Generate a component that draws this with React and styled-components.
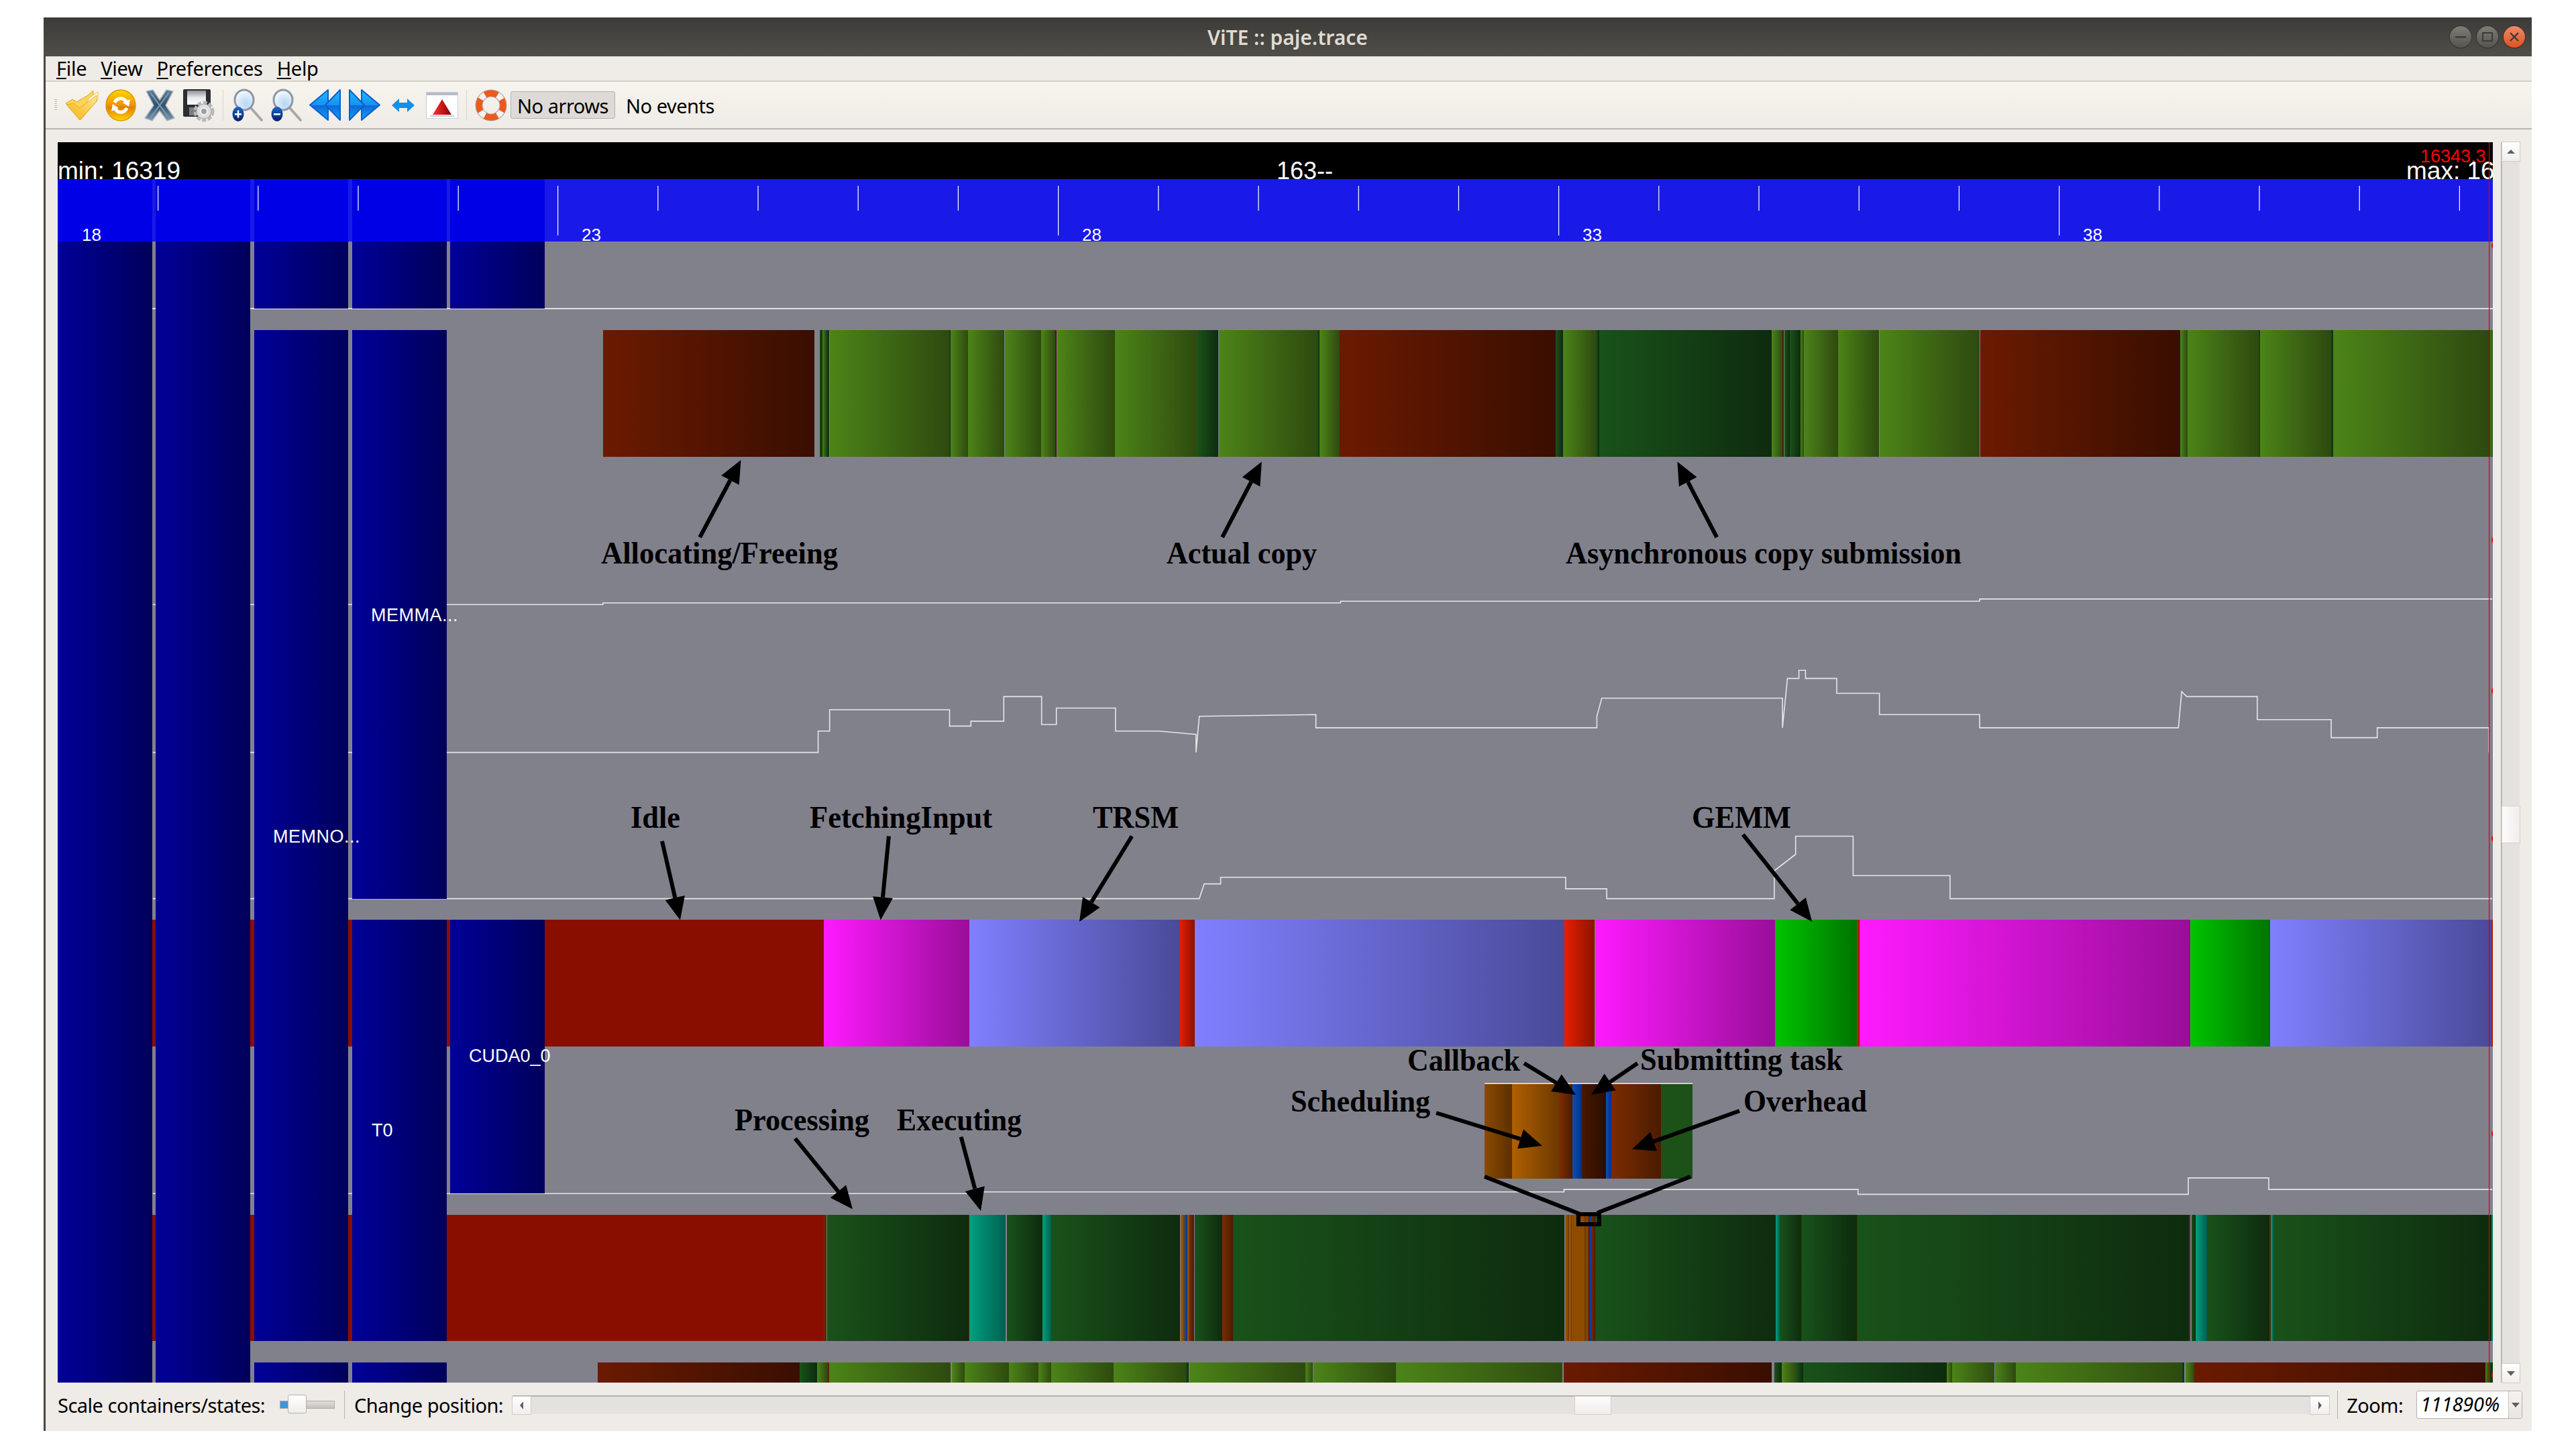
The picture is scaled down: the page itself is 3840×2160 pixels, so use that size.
import React from 'react';
import styled, { createGlobalStyle } from 'styled-components';

const Global = createGlobalStyle`
  html, body { margin: 0; padding: 0; background: #fff; }
  #root { width: 3840px; height: 2160px; }
  * { box-sizing: border-box; }
`;

const Desktop = styled.div`
  width: 3840px;
  height: 2160px;
  padding: 26px 66px 27px 65px;
  background: #fff;
  font-family: "Noto Sans", sans-serif;
  color: #000;
`;
const Win = styled.div`
  height: 2107px;
  display: flex;
  flex-direction: column;
  background: #efebe7;
  border-left: 3px solid #4d4643;
`;
const TitleBar = styled.div`
  flex: 0 0 58px;
  margin-left: -3px;
  display: grid;
  grid-template-columns: 1fr auto 1fr;
  align-items: center;
  background: linear-gradient(#3c3b37, #4f4e49);
`;
const Title = styled.div`
  font-size: 30px;
  font-weight: 600;
  color: #dfdbd2;
`;
const WinButtons = styled.div`
  grid-column: 3;
  justify-self: end;
  display: flex;
  gap: 8px;
  padding-right: 10px;
`;
const WinButton = styled.div`
  width: 32px;
  height: 32px;
  border-radius: 50%;
  display: flex;
  align-items: center;
  justify-content: center;
  box-shadow: 0 0 0 1px #35342f, 0 1px 1px #35342f;
  background: ${p => p.$close ? 'linear-gradient(#f28a68, #e0501e)' : 'linear-gradient(#7d7c77, #55544f)'};
`;
const MenuBar = styled.div`
  flex: 0 0 38px;
  min-height: 0;
  display: flex;
  align-items: center;
  gap: 21px;
  padding-left: 16px;
  border-bottom: 2px solid #d5d1cc;
  font-size: 29px;
  letter-spacing: -0.3px;
  line-height: 34px;
`;
const Mnemonic = styled.span`
  text-decoration: underline;
  text-decoration-thickness: 2px;
  text-underline-offset: 3px;
`;
const ToolBar = styled.div`
  flex: 0 0 71px;
  display: flex;
  align-items: center;
  padding-left: 13px;
  background: linear-gradient(#f7f4ee, #efebe6);
  border-bottom: 2px solid #b9b5b1;
`;
const Grip = styled.div`
  width: 4px;
  height: 18px;
  margin-right: 8px;
  background: repeating-linear-gradient(#bdb9b4 0 1px, transparent 1px 3px);
`;
const ToolButton = styled.div`
  width: 58px;
  height: 50px;
  display: flex;
  align-items: center;
  justify-content: center;
`;
const ToolSep = styled.div`
  width: 15px;
  height: 46px;
  display: flex;
  justify-content: center;
  &::before { content: ""; width: 1px; background: #d8d4cf; }
`;
const ArrowToggle = styled.div`
  flex: 0 0 156px;
  height: 41px;
  display: flex;
  align-items: center;
  justify-content: center;
  padding-top: 2px;
  background: #dedad7;
  border: 1px solid #b5b1ad;
  border-radius: 3px;
  font-size: 29px;
  letter-spacing: -0.5px;
`;
const ToolLabel = styled.div`
  margin-left: 16px;
  padding-top: 2px;
  font-size: 29px;
  letter-spacing: -0.5px;
`;
const Central = styled.div`
  flex: 0 0 1868px;
  display: flex;
  gap: 12px;
  padding: 19px 18px 0;
`;
const Chart = styled.svg`
  display: block;
  flex: 0 0 3630px;
  height: 1849px;
`;
const VScroll = styled.div`
  position: relative;
  flex: 0 0 28px;
  height: 1849px;
  display: flex;
  flex-direction: column;
  justify-content: space-between;
  background: #e4e2df;
  border-left: 2px solid #b9b5b1;
`;
const ScrollCap = styled.div`
  width: ${p => p.$w || '100%'};
  height: ${p => p.$h || '100%'};
  flex: 0 0 auto;
  display: flex;
  align-items: center;
  justify-content: center;
  background: ${p => p.$bg || 'linear-gradient(#fff, #f1efec)'};
  box-shadow: 0 0 0 1px #d0ccc8;
`;
const VThumb = styled.div`
  position: absolute;
  left: 0;
  right: 0;
  top: 990px;
  height: 54px;
  background: linear-gradient(90deg, #fdfcfb, #f0eeeb);
  box-shadow: 0 0 0 1px #d5d1cd;
`;
const Arrow = styled.div`
  width: 0;
  height: 0;
  ${p => p.$dir === 'up' && `border: 6px solid transparent; border-top: 0; border-bottom: 6px solid #5f5f5f;`}
  ${p => p.$dir === 'down' && `border: 6px solid transparent; border-bottom: 0; border-top: 7px solid #5f5f5f;`}
  ${p => p.$dir === 'left' && `border: 6px solid transparent; border-left: 0; border-right: 5px solid #5f5f5f;`}
  ${p => p.$dir === 'right' && `border: 6px solid transparent; border-right: 0; border-left: 5px solid #5f5f5f;`}
`;
const StatusBar = styled.div`
  flex: 1;
  display: flex;
  align-items: center;
  padding: 0 19px 6px 18px;
  font-size: 29px;
  letter-spacing: -0.5px;
  white-space: nowrap;
`;
const StatusText = styled.div`
  flex: 0 0 ${p => p.$w}px;
  margin-right: ${p => p.$mr || 0}px;
`;
const StatusSep = styled.div`
  flex: 0 0 1px;
  height: 42px;
  background: #b9b5b1;
  margin: 0 ${p => p.$r || 14}px 0 ${p => p.$l || 14}px;
`;
const Slider = styled.div`
  position: relative;
  flex: 0 0 82px;
  height: 12px;
  margin-left: 21px;
  background: linear-gradient(#e0deda, #c5c2bd);
  border: 1px solid #b0aca8;
`;
const SliderFill = styled.div`
  position: absolute;
  left: 0;
  top: 0;
  bottom: 0;
  width: 14px;
  background: #3a97dc;
`;
const SliderHandle = styled.div`
  position: absolute;
  left: 11px;
  top: -10px;
  width: 28px;
  height: 28px;
  background: linear-gradient(#fff, #f0eeeb);
  border: 1px solid #b5b1ad;
  border-radius: 3px;
`;
const HScroll = styled.div`
  position: relative;
  flex: 0 0 2708px;
  height: 28px;
  margin-left: 14px;
  display: flex;
  justify-content: space-between;
  background: #e4e2df;
  border-top: 2px solid #b5b1ad;
`;
const HThumb = styled.div`
  position: absolute;
  left: 1584px;
  width: 53px;
  top: 0;
  bottom: 0;
  background: linear-gradient(#fdfcfb, #f0eeeb);
  box-shadow: 0 0 0 1px #d5d1cd;
`;
const Combo = styled.div`
  flex: 0 0 158px;
  height: 42px;
  display: flex;
  background: #fff;
  border: 1px solid #b5b1ad;
  border-radius: 3px;
`;
const ComboText = styled.div`
  flex: 1;
  padding-left: 5px;
  font-style: italic;
  font-size: 29px;
  letter-spacing: -0.2px;
  line-height: 38px;
`;
const ComboArrow = styled.div`
  flex: 0 0 20px;
  display: flex;
  align-items: center;
  justify-content: center;
  background: linear-gradient(#f5f3f0, #e9e6e2);
  border-left: 1px solid #c5c1bd;
`;

const GRADS = {
  brown: ['#6b1a00', '#390e00'],
  g: ['#4c8418', '#2e4a0f'],
  dg: ['#19521a', '#0e2b0e'],
  teal: ['#00a080', '#005f50'],
  blue: ['#000098', '#00005a'],
  mag: ['#ff1aff', '#990e99'],
  vio: ['#8080ff', '#4a4a99'],
  grn: ['#00c400', '#007400'],
  red: ['#e81e00', '#8c1200'],
  org: ['#b06000', '#6b3800'],
  org2: ['#8a4a00', '#5c3000'],
  brn: ['#7c2c00', '#4a1c00'],
  dbr: ['#4a1800', '#2a0c00'],
  bl: ['#0a50b4', '#003090'],
  ins: ['#1c5218', '#1c5218'],
  flat: ['#8a0e00', '#8a0e00'],
};

const topRow = [
  [899,1214,'brown'],[1222,1226,'dg'],[1226,1231,'g'],[1231,1236,'dg'],[1237,1415,'g'],[1415,1417,'dg'],
  [1417,1443,'g'],[1443,1497,'g'],[1498,1552,'g'],[1552,1573,'g'],[1573,1575,'brown'],[1576,1662,'g'],
  [1662,1785,'g'],[1785,1816,'dg'],[1817,1964,'g'],[1964,1967,'dg'],[1967,1997,'g'],[1997,2319,'brown'],
  [2319,2330,'dg'],[2330,2379,'g'],[2379,2384,'dg'],[2384,2641,'dg'],[2641,2657,'g'],[2657,2659,'brown'],
  [2660,2668,'dg'],[2668,2684,'dg'],[2684,2689,'g'],[2689,2740,'g'],[2740,2801,'g'],[2802,2951,'g'],
  [2952,3250,'brown'],[3250,3261,'g'],[3261,3367,'g'],[3367,3369,'dg'],[3369,3474,'g'],[3474,3478,'dg'],
  [3478,3709,'g'],[3709,3712,'dg'],[3712,3716,'g'],
];
const stateRow = [
  [812,1228,'flat'],[1228,1445,'mag'],[1445,1758,'vio'],[1758,1781,'red'],[1781,2332,'vio'],[2332,2377,'red'],
  [2378,2646,'mag'],[2646,2768,'grn'],[2768,2772,'red'],[2772,3265,'mag'],[3265,3384,'grn'],[3384,3714,'vio'],[3714,3716,'red'],
];
const taskRow = [
  [666,1228,'flat'],[1228,1232,'brn'],[1233,1444,'dg'],[1444,1445,'brn'],[1445,1499,'teal'],[1501,1554,'dg'],[1554,1567,'teal'],
  [1567,1759,'dg'],[1760,1766,'org'],[1766,1770,'bl'],[1770,1773,'org'],[1773,1780,'brn'],[1781,1822,'dg'],[1822,1838,'brn'],
  [1838,2332,'dg'],[2333,2339,'org'],[2339,2344,'org'],[2344,2347,'org'],[2347,2350,'org'],[2350,2353,'org'],[2353,2356,'org'],
  [2356,2359,'org'],[2359,2362,'org'],[2362,2365,'org2'],[2365,2367,'org'],[2367,2370,'brn'],[2370,2372,'bl'],[2372,2378,'brn'],
  [2378,2647,'dg'],[2647,2653,'teal'],[2653,2685,'dg'],
  [2685,2686,'brn'],[2686,2768,'dg'],[2768,2769,'brn'],[2769,3263,'dg'],[3263,3265,'brn'],[3267,3273,'dg'],[3273,3290,'teal'],
  [3290,3383,'dg'],[3383,3385,'brn'],[3385,3389,'teal'],[3389,3714,'dg'],[3714,3716,'teal'],
];
const bottomRow = [
  [891,1192,'brown'],[1192,1218,'dg'],[1218,1233,'g'],[1233,1236,'brn'],[1236,1417,'g'],[1419,1438,'g'],[1438,1504,'g'],
  [1504,1548,'g'],[1548,1567,'g'],[1567,1660,'g'],[1660,1767,'g'],[1767,1772,'dg'],[1773,1946,'g'],[1946,1957,'g'],
  [1958,2081,'g'],[2081,2329,'g'],[2331,2641,'brown'],[2645,2656,'dg'],[2656,2678,'g'],[2678,2688,'dg'],[2688,2902,'dg'],
  [2902,2910,'g'],[2910,2973,'g'],[2974,3005,'g'],[3005,3252,'g'],[3252,3256,'dg'],[3258,3271,'g'],[3271,3705,'brown'],
  [3705,3710,'g'],[3710,3716,'dg'],
];
const inset = [
  [2213,2254,'org2'],[2254,2325,'org'],[2325,2344,'brn'],[2344,2358,'bl'],[2358,2394,'dbr'],[2394,2402,'bl'],[2402,2476,'brn'],[2476,2523,'ins'],
];
const columns = [
  [86,227,360,2061],[232,373,360,2061],[379,519,360,460],[379,519,492,1999],[379,519,2031,2061],
  [525,666,360,460],[525,666,492,1340],[525,666,1371,1999],[525,666,2031,2061],
  [671,812,360,460],[671,812,1371,1779],
];
const K = 3840 / 1568;
const pts = list => list.map(([x, y]) => `${(x * K).toFixed(1)},${(y * K).toFixed(1)}`).join(' ');
const counters = [
  [[93,368],[367,368],[367,367],[816,367],[816,366],[1205,366],[1205,364.6],[1517,364.6]],
  [[93,458],[498,458],[498,445],[505,445],[505,432],[578,432],[578,442],[591,442],[591,439],[611,439],[611,424],[634,424],[634,441],[643,441],[643,431],[679,431],[679,445],[705,445],[728,447],[728,458],[730,436],[801,435],[801,443],[972,443],[972,436],[975,425],[1085,425],[1085,443],[1088,413],[1095,413],[1095,408],[1099,408],[1099,413],[1118,413],[1118,422],[1144,422],[1144,435],[1205,435],[1205,443],[1326,443],[1328,421],[1331,424],[1374,424],[1374,438],[1419,438],[1419,449],[1447,449],[1447,443],[1515,443],[1515,458]],
  [[93,547],[730,547],[733,538],[743,538],[743,534],[953,534],[953,541],[978,541],[978,547],[1080,547],[1080,530],[1093,520],[1093,509],[1128,509],[1128,533],[1187,533],[1187,547],[1517,547]],
  [[93,726.5],[590,726.5],[590,725.5],[952,725.5],[952,724],[1131,724],[1131,727],[1332,727],[1332,717],[1381,717],[1381,724],[1517,724]],
];
const arrows = [
  [426*K,327*K,451*K,280*K],[744*K,327*K,768*K,281*K],[1045*K,327*K,1021*K,281*K],
  [403*K,512*K,414*K,560*K],[541*K,509*K,536*K,560*K],[689*K,509*K,657*K,561*K],[1061*K,508*K,1103*K,561*K],
  [484*K,693*K,519*K,736*K],[585*K,692*K,597*K,737*K],
  [2272,1585,2349,1632],[2441,1585,2372,1632],[2141,1659,2299,1708],[2593,1656,2433,1713],
];
const notes = [
  ['Allocating/Freeing',896,840,353],['Actual copy',1739,840,224],['Asynchronous copy submission',2334,840,590],
  ['Idle',940,1234,74],['FetchingInput',1207,1234,272],['TRSM',1629,1234,128],['GEMM',2522,1234,148],
  ['Callback',2098,1596,168],['Submitting task',2445,1595,302],['Scheduling',1924,1657,208],['Overhead',2599,1657,184],
  ['Processing',1095,1685,201],['Executing',1337,1685,186],
];
const minorTicks = Array.from({ length: 24 }, (_, i) => 235 + i * 149.2 + (i > 3 ? -0.8 : 0));

const Bars = ({ list, y, h }) => list.map(([a, b, c], i) => (
  <rect key={i} x={a} y={y} width={b - a} height={h} fill={`url(#t-${c})`} />
));

const ArrowMark = ({ x1, y1, x2, y2 }) => {
  const len = Math.hypot(x2 - x1, y2 - y1);
  const ux = (x2 - x1) / len;
  const uy = (y2 - y1) / len;
  const hl = 34, hw = 15;
  const bx = x2 - ux * hl, by = y2 - uy * hl;
  return (
    <g>
      <line x1={x1} y1={y1} x2={bx} y2={by} stroke="#000" strokeWidth="6" />
      <polygon fill="#000" points={`${x2},${y2} ${bx - uy * hw},${by + ux * hw} ${bx + uy * hw},${by - ux * hw}`} />
    </g>
  );
};

const TraceChart = () => (
  <Chart viewBox="86 212 3630 1849" xmlns="http://www.w3.org/2000/svg">
    <defs>
      {Object.entries(GRADS).map(([k, [a, b]]) => (
        <linearGradient key={k} id={`t-${k}`} x1="0" x2="1" y1="0" y2="0">
          <stop offset="0" stopColor={a} />
          <stop offset="1" stopColor={b} />
        </linearGradient>
      ))}
    </defs>
    <rect x="86" y="212" width="3630" height="1849" fill="#81818c" />
    <rect x="227" y="459.2" width="3489" height="1.8" fill="#e8e8e8" />
    <rect x="227" y="1371" width="600" height="189" fill="#8a0e00" />
    <rect x="227" y="1811" width="446" height="188" fill="#8a0e00" />
    <Bars list={topRow} y={492} h={189} />
    <Bars list={stateRow} y={1371} h={189} />
    <Bars list={taskRow} y={1811} h={188} />
    <Bars list={bottomRow} y={2031} h={30} />
    {counters.map((c, i) => (
      <polyline key={i} points={pts(c)} fill="none" stroke="#e6e6e6" strokeWidth="1.6" />
    ))}
    {columns.map(([a, b, t, e], i) => (
      <rect key={i} x={a} y={t} width={b - a} height={e - t} fill="url(#t-blue)" />
    ))}
    <rect x="86" y="212" width="3630" height="55" fill="#000" />
    <text x="86" y="267" fontFamily="Liberation Sans" fontSize="37" fill="#fff">min: 16319</text>
    <text x="1903" y="267" fontFamily="Liberation Sans" fontSize="36" fill="#fff">163--</text>
    <text x="3608" y="242" fontFamily="Liberation Sans" fontSize="27" fill="#f00">16343.3</text>
    <text x="3587" y="267" fontFamily="Liberation Sans" fontSize="37" fill="#fff">max: 16</text>
    <rect x="86" y="267" width="3630" height="93" fill="#1a1ae8" />
    {[[86,227],[232,373],[379,519],[525,666],[671,812]].map(([a, b]) => (
      <rect key={a} x={a} y="267" width={b - a} height="93" fill="#0000e6" />
    ))}
    {minorTicks.map((x, i) => (
      <rect key={i} x={x} y="277" width="1.2" height={i % 5 === 4 ? 74 : 37} fill="#fff" />
    ))}
    {[['18',122],['23',867],['28',1613],['33',2359],['38',3105]].map(([t, x]) => (
      <text key={t} x={x} y="359" fontFamily="Liberation Sans" fontSize="26" fill="#fff">{t}</text>
    ))}
    <text x="553" y="926" fontFamily="Liberation Sans" fontSize="27" letterSpacing="0.5" fill="#fff">MEMMA...</text>
    <text x="407" y="1256" fontFamily="Liberation Sans" fontSize="27" letterSpacing="0.5" fill="#fff">MEMNO...</text>
    <text x="699" y="1583" fontFamily="Liberation Sans" fontSize="27" fill="#fff">CUDA0_0</text>
    <text x="554" y="1694" fontFamily="Liberation Sans" fontSize="27" fill="#fff">T0</text>
    <rect x="3710" y="212" width="1.2" height="1849" fill="#e00000" />
    {[366, 805, 1030, 1250, 1690, 2050].map(y => <circle key={y} cx="3720" cy={y} r="6" fill="#e00000" />)}
    <Bars list={inset} y={1615} h={142} />
    <rect x="2213" y="1614.5" width="310" height="1.5" fill="#eee" />
    <polyline points="2213,1754 2356,1810" fill="none" stroke="#000" strokeWidth="6" />
    <polyline points="2520,1754 2381,1808" fill="none" stroke="#000" strokeWidth="6" />
    <rect x="2353" y="1810" width="31" height="15" fill="none" stroke="#000" strokeWidth="6" />
    {arrows.map(([x1, y1, x2, y2], i) => <ArrowMark key={i} x1={x1} y1={y1} x2={x2} y2={y2} />)}
    {notes.map(([t, x, y, w]) => (
      <text key={t} x={x} y={y} textLength={w} lengthAdjust="spacingAndGlyphs" fontFamily="Liberation Serif" fontWeight="700" fontSize="46" fill="#000">{t}</text>
    ))}
  </Chart>
);

const Icon = styled.svg`
  display: block;
  overflow: visible;
`;

const FolderIcon = () => (
  <Icon width="50" height="46" viewBox="0 0 50 46">
    <defs>
      <linearGradient id="fo" x1="0" x2="1" y1="1" y2="0"><stop offset="0" stopColor="#f6b014" /><stop offset="1" stopColor="#ffe88a" /></linearGradient>
    </defs>
    <path d="M1 20 L11 14 L17 18 L34 8 L42 1 L42 14 L22 42 Z" fill="#fcd45a" stroke="#dda020" strokeWidth="1" />
    <path d="M36 12 L49 3 L49 14 L24 44 L20 44 Z" fill="#fffbe6" stroke="#e0c060" strokeWidth="1" />
    <path d="M2 22 L13 20 L22 27 L47 8 L47 17 L22 45 Z" fill="url(#fo)" stroke="#eda820" strokeWidth="1" />
  </Icon>
);
const ReloadIcon = () => (
  <Icon width="46" height="48" viewBox="0 0 46 48">
    <defs>
      <linearGradient id="or" x1="0" x2="0" y1="0" y2="1"><stop offset="0" stopColor="#ffd60a" /><stop offset=".5" stopColor="#f09200" /><stop offset=".56" stopColor="#e07e00" /><stop offset="1" stopColor="#ffd600" /></linearGradient>
    </defs>
    <ellipse cx="23" cy="24" rx="22" ry="23" fill="url(#or)" stroke="#d99a00" strokeWidth="1.5" />
    <path d="M14 20 A10 11 0 0 1 32 20" fill="none" stroke="#fff" strokeWidth="5" />
    <path d="M14 28 A10 11 0 0 0 32 28" fill="none" stroke="#fff" strokeWidth="5" />
    <path d="M26 20 L37 15 L35 26 Z" fill="#fff" />
    <path d="M20 28 L9 33 L11 22 Z" fill="#fff" />
  </Icon>
);
const CloseIcon = () => (
  <Icon width="44" height="46" viewBox="0 0 44 46">
    <defs>
      <linearGradient id="xg" x1="0" x2="0" y1="0" y2="1"><stop offset="0" stopColor="#5f7f97" /><stop offset=".5" stopColor="#34506a" /><stop offset="1" stopColor="#7d9ab0" /></linearGradient>
    </defs>
    <path d="M2 2 L12 0 L22 15 L32 0 L42 2 L31 23 L44 42 L33 46 L22 31 L11 46 L0 42 L13 23 Z" fill="url(#xg)" stroke="#a9bccb" strokeWidth="1.5" strokeLinejoin="round" />
    <path d="M8 4 L22 23 L36 4 M8 42 L22 23 L36 42" fill="none" stroke="#7f9bb0" strokeWidth="2" />
  </Icon>
);
const SaveIcon = () => (
  <Icon width="48" height="48" viewBox="0 0 48 48">
    <defs>
      <linearGradient id="fl" x1="0" x2="0" y1="0" y2="1"><stop offset="0" stopColor="#8d9195" /><stop offset=".5" stopColor="#e6e8ea" /><stop offset="1" stopColor="#ffffff" /></linearGradient>
    </defs>
    <rect x="1" y="0" width="41" height="41" rx="2" fill="#2b2d30" />
    <rect x="7" y="2" width="28" height="21" fill="url(#fl)" />
    <rect x="10" y="27" width="13" height="12" fill="#7a7e82" />
    <circle cx="32" cy="33" r="13" fill="none" stroke="#b9b9b9" strokeWidth="5" strokeDasharray="6 2.5" />
    <circle cx="32" cy="33" r="11" fill="#dedede" stroke="#a6a6a6" strokeWidth="1" />
    <circle cx="32" cy="33" r="5" fill="#a0a0a0" stroke="#f2f2f2" strokeWidth="2" />
  </Icon>
);
const LensIcon = ({ id, plus }) => (
  <Icon width="46" height="48" viewBox="0 0 46 48">
    <defs>
      <radialGradient id={`lg${id}`} cx=".6" cy=".7" r=".8"><stop offset="0" stopColor="#b5d6f5" /><stop offset="1" stopColor="#fff" /></radialGradient>
      <linearGradient id={`bg${id}`} x1="0" x2="0" y1="0" y2="1"><stop offset="0" stopColor="#1b67c8" /><stop offset="1" stopColor="#041c66" /></linearGradient>
    </defs>
    <line x1="28" y1="28" x2="44" y2="46" stroke="#a8a8a8" strokeWidth="4" strokeLinecap="round" />
    <ellipse cx="18" cy="16" rx="14" ry="15" fill={`url(#lg${id})`} stroke="#8e98a2" strokeWidth="3" />
    <ellipse cx="9" cy="37" rx="8.5" ry="11" fill={`url(#bg${id})`} />
    <rect x="4" y="36" width="10" height="2.5" fill="#fff" />
    {plus && <rect x="7.8" y="31.5" width="2.5" height="11" fill="#fff" />}
  </Icon>
);
const SkipIcon = ({ id, flip }) => (
  <Icon width="48" height="47" viewBox="0 0 48 47" style={flip ? { transform: 'scaleX(-1)' } : undefined}>
    <defs>
      <linearGradient id={`sk${id}`} x1="0" x2="0" y1="0" y2="1"><stop offset="0" stopColor="#19c0ff" /><stop offset=".5" stopColor="#1990f0" /><stop offset=".52" stopColor="#0a6ad8" /><stop offset="1" stopColor="#1aa0f5" /></linearGradient>
    </defs>
    <polygon points="1,23.5 28,1 28,46" fill={`url(#sk${id})`} stroke="#0a5fcb" strokeWidth="2" strokeLinejoin="round" />
    <polygon points="24,23.5 46,1 46,46" fill={`url(#sk${id})`} stroke="#0a5fcb" strokeWidth="2" strokeLinejoin="round" />
  </Icon>
);
const FitIcon = () => (
  <Icon width="34" height="20" viewBox="0 0 34 20">
    <path d="M0 10 L11 0 V6 H23 V0 L34 10 L23 20 V14 H11 V20 Z" fill="#1590e8" />
  </Icon>
);
const WindowIcon = () => (
  <Icon width="48" height="40" viewBox="0 0 48 40">
    <defs>
      <linearGradient id="tr" x1="0" x2="1" y1="0" y2="0"><stop offset="0" stopColor="#ff3030" /><stop offset="1" stopColor="#8c0000" /></linearGradient>
    </defs>
    <rect x="0.5" y="0.5" width="47" height="39" fill="#fff" stroke="#c8ced6" />
    <rect x="1" y="1" width="46" height="4" fill="#b4bcc6" />
    <polygon points="24,11 38,34 10,34" fill="url(#tr)" />
    <rect x="6" y="35" width="36" height="2" fill="#c4ccd4" />
  </Icon>
);
const BuoyIcon = () => (
  <Icon width="46" height="46" viewBox="0 0 46 46">
    <circle cx="23" cy="23" r="18" fill="none" stroke="#a4a4a4" strokeWidth="11" />
    <circle cx="23" cy="23" r="18" fill="none" stroke="#f0591a" strokeWidth="9" />
    <circle cx="23" cy="23" r="18" fill="none" stroke="#f3f3f3" strokeWidth="9" strokeDasharray="9 19.3" strokeDashoffset="19" />
  </Icon>
);

const Tool = ({ children }) => <ToolButton>{children}</ToolButton>;
const Menu = ({ first, rest }) => <div><Mnemonic>{first}</Mnemonic>{rest}</div>;

export default function App() {
  return (
    <Desktop>
      <Global />
      <Win>
        <TitleBar>
          <div />
          <Title>ViTE :: paje.trace</Title>
          <WinButtons>
            <WinButton>
              <Icon width="16" height="4" viewBox="0 0 16 4"><rect y="1" width="16" height="2.5" fill="#3c3b37" /></Icon>
            </WinButton>
            <WinButton>
              <Icon width="16" height="14" viewBox="0 0 16 14"><rect x="1" y="1" width="14" height="12" fill="none" stroke="#3c3b37" strokeWidth="2" /></Icon>
            </WinButton>
            <WinButton $close>
              <Icon width="14" height="14" viewBox="0 0 14 14"><path d="M1 1 L13 13 M13 1 L1 13" stroke="#3c3b37" strokeWidth="2.4" /></Icon>
            </WinButton>
          </WinButtons>
        </TitleBar>
        <MenuBar>
          <Menu first="F" rest="ile" />
          <Menu first="V" rest="iew" />
          <Menu first="P" rest="references" />
          <Menu first="H" rest="elp" />
        </MenuBar>
        <ToolBar>
          <Grip />
          <Tool><FolderIcon /></Tool>
          <Tool><ReloadIcon /></Tool>
          <Tool><CloseIcon /></Tool>
          <Tool><SaveIcon /></Tool>
          <ToolSep />
          <Tool><LensIcon id="a" plus /></Tool>
          <Tool><LensIcon id="b" /></Tool>
          <Tool><SkipIcon id="a" /></Tool>
          <Tool><SkipIcon id="b" flip /></Tool>
          <Tool><FitIcon /></Tool>
          <Tool><WindowIcon /></Tool>
          <ToolSep />
          <Tool><BuoyIcon /></Tool>
          <ArrowToggle>No arrows</ArrowToggle>
          <ToolLabel>No events</ToolLabel>
        </ToolBar>
        <Central>
          <TraceChart />
          <VScroll>
            <ScrollCap $h="28px"><Arrow $dir="up" /></ScrollCap>
            <VThumb />
            <ScrollCap $h="28px"><Arrow $dir="down" /></ScrollCap>
          </VScroll>
        </Central>
        <StatusBar>
          <StatusText $w={310}>Scale containers/states:</StatusText>
          <Slider><SliderFill /><SliderHandle /></Slider>
          <StatusSep />
          <StatusText $w={218}>Change position:</StatusText>
          <HScroll>
            <ScrollCap $w="27px"><Arrow $dir="left" /></ScrollCap>
            <HThumb />
            <ScrollCap $w="28px"><Arrow $dir="right" /></ScrollCap>
          </HScroll>
          <StatusSep $l="12" $r="13" />
          <StatusText $w={84} $mr={20}>Zoom:</StatusText>
          <Combo>
            <ComboText>111890%</ComboText>
            <ComboArrow><Arrow $dir="down" /></ComboArrow>
          </Combo>
        </StatusBar>
      </Win>
    </Desktop>
  );
}
